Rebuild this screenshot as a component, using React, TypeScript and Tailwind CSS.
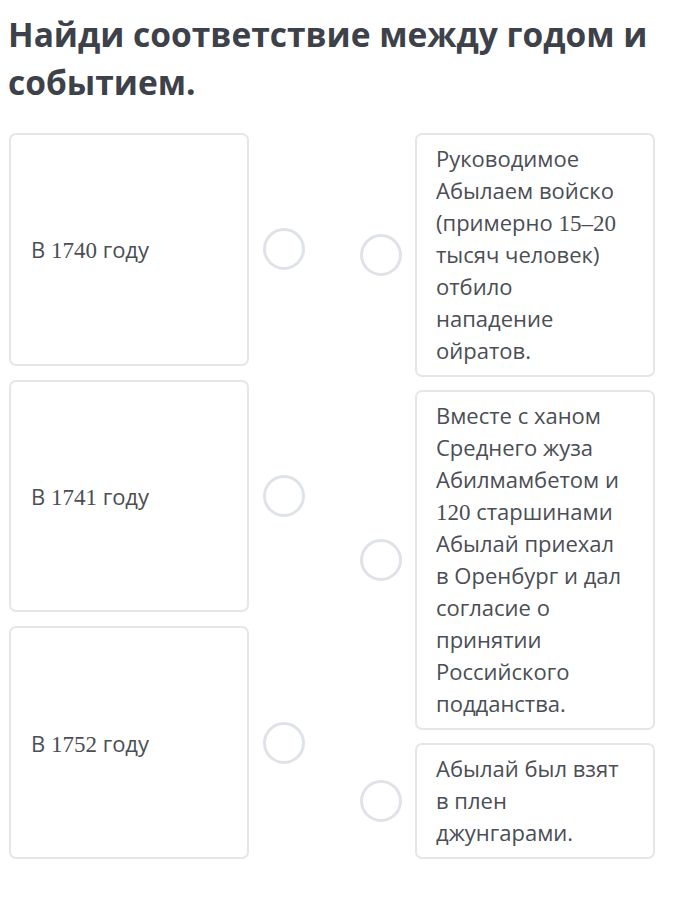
import React from "react";

const N = ({ children }: { children: React.ReactNode }) => (
  <span className="font-['Liberation_Serif',serif] text-[23px] leading-none">{children}</span>
);

const Circle = () => (
  <div className="w-[42px] h-[42px] shrink-0 rounded-full border-[3px] border-[#dfe3e7] bg-white" />
);

const LeftRow = ({ children }: { children: React.ReactNode }) => (
  <div className="flex-1 flex items-center gap-[14px]">
    <div className="w-[240px] self-stretch flex items-center rounded-[7px] border-2 border-[#e4e6e9] pl-[20px] text-[22px] leading-[32px] text-[#4a4e55]">
      <span>{children}</span>
    </div>
    <Circle />
  </div>
);

const RightRow = ({ children }: { children: React.ReactNode }) => (
  <div className="flex items-center gap-[13px]">
    <Circle />
    <div className="w-[240px] rounded-[7px] border-2 border-[#e4e6e9] pl-[19px] pr-[24px] pt-[7px] pb-[9px] text-[22px] leading-[32px] text-[#4a4e55]">
      {children}
    </div>
  </div>
);

export default function App() {
  return (
    <div className="w-[680px] h-[904px] bg-white font-['Open_Sans',sans-serif] px-[9px] pt-[10px]">
      <h1 className="text-[33.5px] leading-[48px] font-bold text-[#3d4149] -ml-[1px]">
        Найди соответствие между годом и событием.
      </h1>
      <div className="mt-[27px] flex">
        <div className="flex flex-col gap-[14px]">
          <LeftRow>
            В <N>1740</N> году
          </LeftRow>
          <LeftRow>
            В <N>1741</N> году
          </LeftRow>
          <LeftRow>
            В <N>1752</N> году
          </LeftRow>
        </div>
        <div className="ml-[55px] flex flex-col gap-[13px]">
          <RightRow>
            Руководимое Абылаем войско (примерно <N>15–20</N> тысяч человек) отбило нападение ойратов.
          </RightRow>
          <RightRow>
            Вместе с ханом Среднего жуза Абилмамбетом и <N>120</N> старшинами Абылай приехал в Оренбург и дал согласие о принятии Российского подданства.
          </RightRow>
          <RightRow>Абылай был взят в плен джунгарами.</RightRow>
        </div>
      </div>
    </div>
  );
}
